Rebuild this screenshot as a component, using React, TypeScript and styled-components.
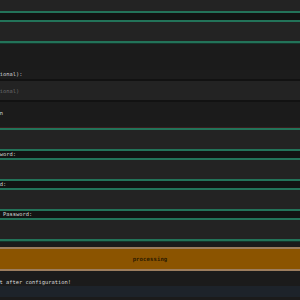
import styled, { createGlobalStyle } from 'styled-components';

const GlobalStyle = createGlobalStyle`
    html, body {
        margin: 0;
        padding: 0;
        background-color: #1b1b1b;
        overflow: hidden;
    }
    body {
        width: 300px;
        height: 300px;
        font-family: "DejaVu Sans Mono", "Liberation Mono", monospace;
        font-size: 5.4px;
        color: #d2d2d2;
    }
`;

const Page = styled.div`
    width: 300px;
    height: 300px;
    display: flex;
    justify-content: center;
    overflow: hidden;
`;

const Form = styled.form`
    width: 354px;
    flex-shrink: 0;
    margin-top: -10px;
    display: flex;
    flex-direction: column;
`;

const Label = styled.label<{ $band?: boolean }>`
    display: block;
    height: ${(p) => (p.$band ? '7px' : '9px')};
    line-height: ${(p) => (p.$band ? '7px' : '9px')};
    padding: 0 4px;
    background-color: ${(p) => (p.$band ? '#121413' : '#1c1c1c')};
    color: #d4d4d4;
    white-space: nowrap;
`;

const Input = styled.input<{ $focus?: boolean; $warn?: boolean }>`
    display: block;
    box-sizing: border-box;
    width: 100%;
    height: 23px;
    margin: 0;
    padding: 0 4px;
    font-family: inherit;
    font-size: 5.4px;
    color: #d2d2d2;
    background-color: #232323;
    border: none;
    border-top: 2px solid ${(p) => (p.$focus ? '#237359' : '#121212')};
    border-bottom: 2px solid ${(p) => (p.$focus ? '#237359' : '#121212')};
    box-shadow: ${(p) =>
        p.$warn
            ? '0 -1px 0 #3a1d1f'
            : p.$focus
              ? '0 1px 0 #15352b'
              : 'none'};
    outline: none;
    &::placeholder {
        color: #6a6a6a;
    }
`;

const Spacer = styled.div<{ $h: number }>`
    height: ${(p) => p.$h}px;
`;

const Hint = styled.div`
    height: 26px;
    padding: 8px 4px 0;
    box-sizing: border-box;
    white-space: nowrap;
    color: #d4d4d4;
`;

const Button = styled.button`
    box-sizing: border-box;
    height: 24px;
    margin: 6px 0 0;
    border: 2px solid #9c7d5e;
    border-left: none;
    border-right: none;
    background-color: #8b5400;
    color: #2c1a00;
    font-family: inherit;
    font-size: 5.6px;
    font-weight: bold;
    letter-spacing: 0.1px;
`;

const Note = styled.div`
    height: 15px;
    line-height: 8px;
    padding: 7px 4px 0 7px;
    box-sizing: border-box;
    white-space: nowrap;
    color: #dadada;
`;

const Console = styled.div`
    height: 11px;
    background-color: #1d232a;
`;

function App() {
    return (
        <>
            <GlobalStyle />
            <Page>
                <Form onSubmit={(e) => e.preventDefault()}>
                    <Input $focus />
                    <Label $band>SSID:</Label>
                    <Input $focus />
                    <Spacer $h={27} />
                    <Label>IP (optional):</Label>
                    <Input placeholder="IP (optional)" />
                    <Hint>Location</Hint>
                    <Input $focus $warn />
                    <Label $band>AP Password:</Label>
                    <Input $focus type="password" />
                    <Label $band>Password:</Label>
                    <Input $focus type="password" />
                    <Label $band>Confirm Password:</Label>
                    <Input $focus type="password" />
                    <Button type="submit">processing</Button>
                    <Note>Restart after configuration!</Note>
                    <Console />
                </Form>
            </Page>
        </>
    );
}

export default App;
